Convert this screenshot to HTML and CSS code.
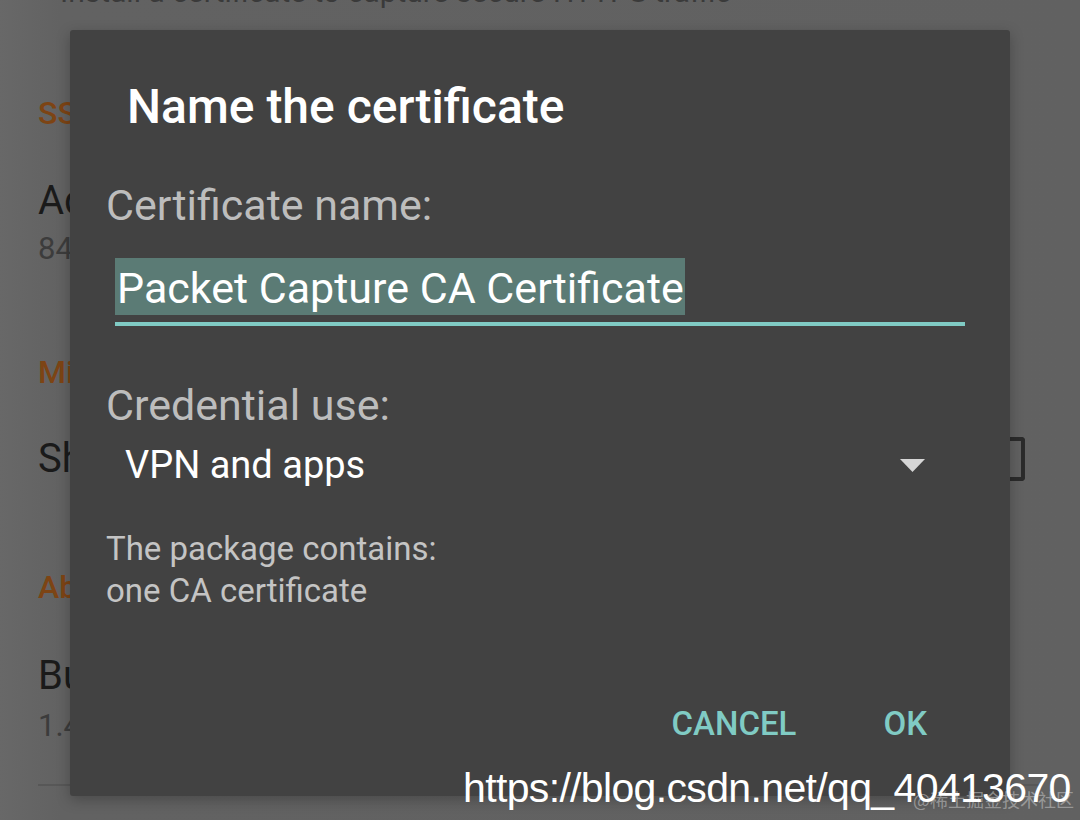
FILE: index.html
```html
<!DOCTYPE html>
<html>
<head>
<meta charset="utf-8">
<link rel="stylesheet" href="styles.css">
</head>
<body>
<div class="screen">
  <div class="settings">
    <div class="intro">Install a certificate to capture secure HTTPS traffic</div>
    <div class="section sec-ssl">SSL</div>
    <div class="item item-add">
      <div class="item-title">Add certificate</div>
      <div class="item-sub">84:2B:1A:C0:5D:7F</div>
    </div>
    <div class="section sec-misc">Misc</div>
    <div class="item item-check">
      <div class="item-title">Show notifications</div>
      <div class="checkbox"></div>
    </div>
    <div class="section sec-about">About</div>
    <div class="item item-build">
      <div class="item-title">Build version</div>
      <div class="item-sub">1.4.7</div>
    </div>
    <div class="divider"></div>
  </div>

  <div class="dialog">
    <div class="dialog-title">Name the certificate</div>
    <div class="label">Certificate name:</div>
    <div class="field">
      <span class="selected">Packet Capture CA Certificate</span>
    </div>
    <div class="label label-cred">Credential use:</div>
    <div class="spinner">
      <span class="spinner-text">VPN and apps</span>
      <svg class="arrow" width="25" height="13" viewBox="0 0 25 13"><polygon points="0,0 25,0 12.5,13" fill="#d6d6d6"/></svg>
    </div>
    <div class="info">The package contains:<br>one CA certificate</div>
    <div class="actions">
      <span class="btn">CANCEL</span>
      <span class="btn btn-ok">OK</span>
    </div>
  </div>

  <div class="watermark-cn">@稀土掘金技术社区</div>
  <div class="watermark">https://blog.csdn.net/qq_40413670</div>
</div>
</body>
</html>
```

FILE: styles.css
```css
html, body {
  margin: 0;
  padding: 0;
}
body {
  width: 1080px;
  height: 820px;
  overflow: hidden;
  background: #636363;
  font-family: Roboto, "Noto Sans", sans-serif;
}
.screen {
  position: relative;
  width: 1080px;
  height: 820px;
  overflow: hidden;
  background: linear-gradient(to right, #686868 0, #626262 60px, #616161 100%);
}
.settings {
  padding: 0 38px;
  display: flex;
  flex-direction: column;
}
.intro {
  margin-top: -26px;
  height: 36px;
  font-size: 30px;
  line-height: 36px;
  color: #3a3a3a;
  padding-left: 22px;
  white-space: nowrap;
}
.section {
  color: #7d4414;
  font-size: 32px;
  font-weight: 500;
  line-height: 40px;
  height: 40px;
}
.item {
  display: flex;
  flex-direction: column;
}
.item-title {
  color: #1a1a1a;
  font-size: 40px;
  line-height: 48px;
  white-space: nowrap;
}
.item-sub {
  color: #3c3c3c;
  font-size: 31px;
  line-height: 40px;
  margin-top: 4px;
}
.sec-ssl { margin-top: 83px; }
.item-add { margin-top: 44px; }
.sec-misc { margin-top: 83px; }
.item-check {
  flex-direction: row;
  justify-content: space-between;
  align-items: center;
  margin-top: 43px;
}
.checkbox {
  width: 20px;
  height: 36px;
  border: 4px solid #2b2b2b;
  border-left: none;
  border-radius: 0 4px 4px 0;
  margin-right: 17px;
}
.sec-about { margin-top: 84px; }
.item-build { margin-top: 45px; }
.item-build .item-sub { margin-top: 6px; }
.divider {
  margin-top: 38px;
  height: 2px;
  background: #575757;
}

.dialog {
  position: absolute;
  left: 70px;
  top: 30px;
  width: 940px;
  height: 766px;
  background: #424242;
  border-radius: 3px;
  box-shadow: 0 4px 14px rgba(0,0,0,0.25);
  box-sizing: border-box;
  padding: 0 36px;
  display: flex;
  flex-direction: column;
}
.dialog-title {
  margin-top: 49px;
  margin-left: 21px;
  color: #ffffff;
  font-size: 48px;
  font-weight: 500;
  line-height: 56px;
  white-space: nowrap;
}
.label {
  color: #bdbdbd;
  font-size: 43px;
  line-height: 50px;
  margin-top: 45px;
  white-space: nowrap;
}
.label-cred {
  margin-top: 54px;
}
.field {
  margin-top: 28px;
  margin-left: 9px;
  width: 850px;
  border-bottom: 4px solid #80cbc4;
  padding-bottom: 7px;
  display: flex;
}
.selected {
  display: inline-block;
  background: #5b7b75;
  color: #ffffff;
  font-size: 43px;
  line-height: 54px;
  padding: 3px 1px 0 2px;
  white-space: nowrap;
}
.spinner {
  margin-top: 12px;
  margin-left: 19px;
  width: 800px;
  display: flex;
  justify-content: space-between;
  align-items: center;
}
.spinner-text {
  color: #ffffff;
  font-size: 38px;
  line-height: 46px;
}
.arrow {
  margin-top: 1px;
}
.info {
  margin-top: 40px;
  color: #c4c4c4;
  font-size: 33px;
  line-height: 42px;
}
.actions {
  margin-top: auto;
  margin-bottom: 52px;
  display: flex;
  justify-content: flex-end;
  gap: 87px;
  padding-right: 47px;
}
.btn {
  color: #80cbc4;
  font-size: 33px;
  font-weight: 500;
  line-height: 40px;
}

.watermark {
  position: absolute;
  left: 463px;
  top: 762px;
  color: #ffffff;
  font-family: "Liberation Sans", Arial, sans-serif;
  font-size: 41px;
  line-height: 52px;
  letter-spacing: -0.65px;
  white-space: nowrap;
}
.watermark-cn {
  position: absolute;
  left: 913px;
  top: 787px;
  color: rgba(200,200,200,0.55);
  font-family: "Noto Sans CJK SC", sans-serif;
  font-size: 18px;
  line-height: 24px;
  white-space: nowrap;
}
```
